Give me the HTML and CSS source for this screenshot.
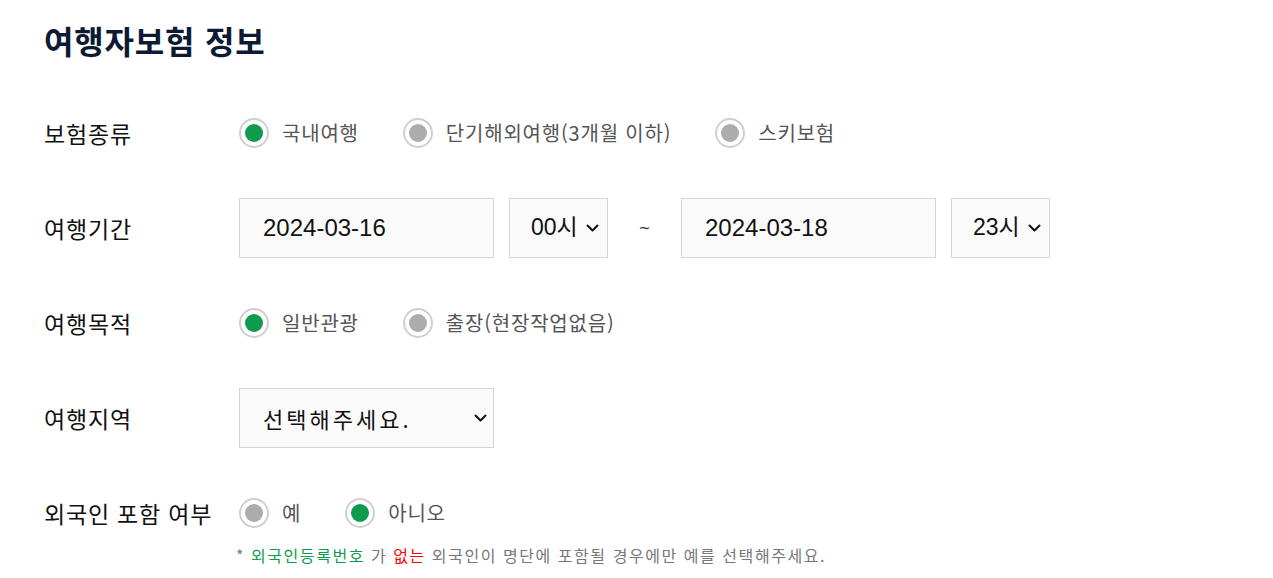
FILE: index.html
```html
<!DOCTYPE html>
<html lang="ko">
<head>
<meta charset="utf-8">
<title>여행자보험 정보</title>
<link rel="stylesheet" href="styles.css">
</head>
<body>
<div class="page">
  <h1 class="title">여행자보험 정보</h1>
  <div class="form">
    <div class="row">
      <div class="label">보험종류</div>
      <div class="control">
        <div class="radio-group">
          <span class="radio"><span class="dot on"></span><span class="rtext">국내여행</span></span>
          <span class="radio"><span class="dot"></span><span class="rtext">단기해외여행(3개월 이하)</span></span>
          <span class="radio"><span class="dot"></span><span class="rtext">스키보험</span></span>
        </div>
      </div>
    </div>
    <div class="row">
      <div class="label">여행기간</div>
      <div class="control dates">
        <div class="field date">2024-03-16</div>
        <div class="field hour"><span class="hour-text">00시</span><svg class="chev" viewBox="0 0 13 8"><path d="M1.5 1.5 L6.5 6.5 L11.5 1.5"/></svg></div>
        <div class="tilde">~</div>
        <div class="field date">2024-03-18</div>
        <div class="field hour"><span class="hour-text">23시</span><svg class="chev" viewBox="0 0 13 8"><path d="M1.5 1.5 L6.5 6.5 L11.5 1.5"/></svg></div>
      </div>
    </div>
    <div class="row">
      <div class="label">여행목적</div>
      <div class="control">
        <div class="radio-group">
          <span class="radio"><span class="dot on"></span><span class="rtext">일반관광</span></span>
          <span class="radio"><span class="dot"></span><span class="rtext">출장(현장작업없음)</span></span>
        </div>
      </div>
    </div>
    <div class="row">
      <div class="label">여행지역</div>
      <div class="control">
        <div class="field region"><span class="region-text">선택해주세요.</span><svg class="chev" viewBox="0 0 13 8"><path d="M1.5 1.5 L6.5 6.5 L11.5 1.5"/></svg></div>
      </div>
    </div>
    <div class="row last">
      <div class="label">외국인 포함 여부</div>
      <div class="control stack">
        <div class="radio-group">
          <span class="radio"><span class="dot"></span><span class="rtext">예</span></span>
          <span class="radio"><span class="dot on"></span><span class="rtext">아니오</span></span>
        </div>
        <p class="note">* <span class="green">외국인등록번호</span> 가 <span class="red">없는</span> 외국인이 명단에 포함될 경우에만 예를 선택해주세요.</p>
      </div>
    </div>
  </div>
</div>
</body>
</html>
```

FILE: styles.css
```css
* { box-sizing: border-box; }
body {
  margin: 0;
  background: #ffffff;
  font-family: "Noto Sans CJK KR", "Noto Sans", sans-serif;
  color: #111;
}
.page {
  padding: 20px 44px;
}
.title {
  margin: 0 0 43px;
  font-size: 32px;
  line-height: 40px;
  font-weight: 700;
  color: #0c1b33;
  letter-spacing: 0.8px;
}
.form {
  display: flex;
  flex-direction: column;
  gap: 35px;
}
.row {
  display: flex;
  align-items: flex-start;
}
.label {
  width: 195px;
  flex: none;
  height: 60px;
  line-height: 60px;
  font-size: 23px;
  letter-spacing: 0.8px;
  color: #111;
}
.control {
  display: flex;
  align-items: center;
  height: 60px;
}
.control.stack {
  flex-direction: column;
  align-items: flex-start;
  height: auto;
}
.radio-group {
  display: flex;
  align-items: center;
  gap: 44px;
  height: 60px;
}
.radio {
  display: flex;
  align-items: center;
  gap: 13px;
}
.dot {
  width: 30px;
  height: 30px;
  border-radius: 50%;
  border: 2px solid #cfcfcf;
  background: #fff;
  display: flex;
  align-items: center;
  justify-content: center;
  flex: none;
}
.dot::after {
  content: "";
  width: 18px;
  height: 18px;
  border-radius: 50%;
  background: #acacac;
}
.dot.on::after {
  background: #0e9c4c;
}
.rtext {
  font-size: 20px;
  letter-spacing: 0.8px;
  color: #555;
  line-height: 30px;
}
.dates {
  gap: 15px;
}
.field {
  height: 60px;
  border: 1px solid #d5d5d5;
  background: #fafafa;
  display: flex;
  align-items: center;
  font-family: "Liberation Sans", "Noto Sans CJK KR", sans-serif;
  font-size: 24px;
  line-height: 28px;
  color: #111;
}
.date {
  width: 255px;
  padding-left: 23px;
}
.hour {
  width: 99px;
  padding-left: 21px;
  gap: 8px;
}
.hour-text {
  font-size: 23px;
  line-height: 28px;
  display: block;
  margin-top: -3px;
}
.chev {
  width: 13px;
  height: 8px;
  fill: none;
  stroke: #111;
  stroke-width: 2;
  stroke-linecap: round;
  stroke-linejoin: round;
}
.tilde {
  width: 43px;
  text-align: center;
  font-size: 18px;
  color: #333;
  font-family: "Liberation Sans", sans-serif;
}
.region {
  width: 255px;
  padding: 0 6px 0 23px;
  justify-content: space-between;
}
.region-text {
  font-family: "Noto Sans CJK KR", sans-serif;
  font-size: 22px;
  letter-spacing: 3px;
}
.note {
  margin: 2px 0 0 -3px;
  font-size: 16px;
  letter-spacing: 1.55px;
  line-height: 20px;
  color: #777;
}
.green { color: #0e9c4c; }
.red { color: #ff0000; }
```
